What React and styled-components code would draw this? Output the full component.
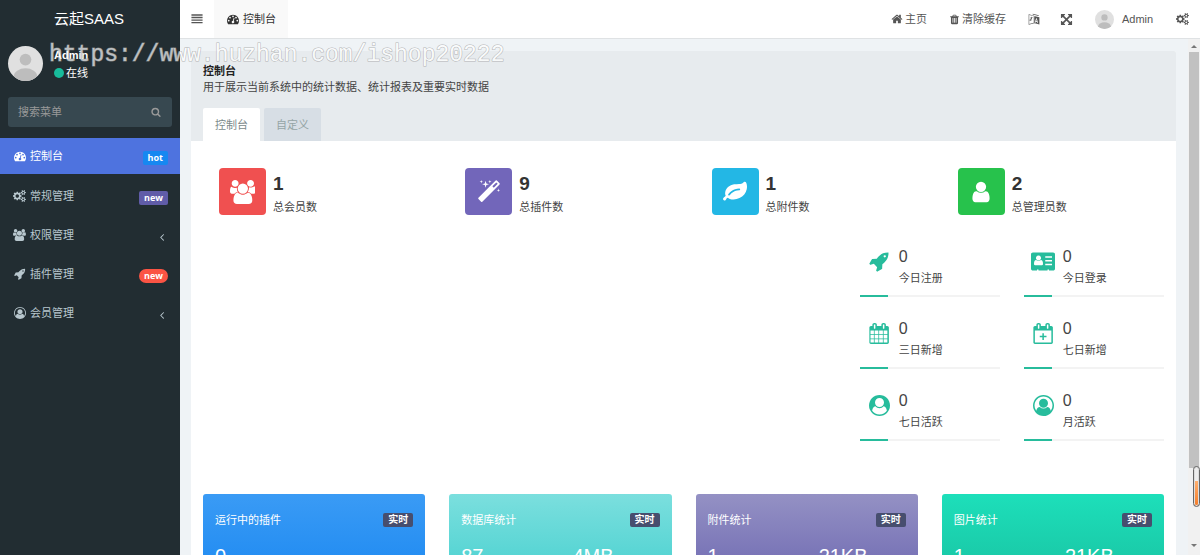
import React, { useState } from 'react';
import styled, { createGlobalStyle } from 'styled-components';

const GlobalStyle = createGlobalStyle`
	* {
		box-sizing: border-box;
	}

	body {
		margin: 0;
		overflow: hidden;
		font-family: "Liberation Sans", "Noto Sans CJK SC", sans-serif;
		font-size: 11px;
		line-height: 16px;
		color: #444;
		background: #eff3f6;
	}

	a {
		color: inherit;
		text-decoration: none;
	}

	button, input {
		font: inherit;
		color: inherit;
		border: 0;
		padding: 0;
		background: none;
	}

	button {
		cursor: pointer;
	}
`;

const CALENDAR_FRAME = 'M544 448v-288q0-13-9.5-22.5t-22.5-9.5h-64q-13 0-22.5 9.5t-9.5 22.5v288q0 13 9.5 22.5t22.5 9.5h64q13 0 22.5-9.5t9.5-22.5zm768 0v-288q0-13-9.5-22.5t-22.5-9.5h-64q-13 0-22.5 9.5t-9.5 22.5v288q0 13 9.5 22.5t22.5 9.5h64q13 0 22.5-9.5t9.5-22.5zm384-64v1280q0 52-38 90t-90 38h-1408q-52 0-90-38t-38-90v-1280q0-52 38-90t90-38h128v-96q0-66 47-113t113-47h64q66 0 113 47t47 113v96h384v-96q0-66 47-113t113-47h64q66 0 113 47t47 113v96h128q52 0 90 38t38 90z';

const COG_SMALL = 'q0 16-149 31-12 27-30 52 51 113 51 138 0 4-4 7-122 71-124 71-8 0-46-47t-52-68q-20 2-30 2t-30-2q-14 21-52 68t-46 47q-2 0-124-71-4-3-4-7 0-25 51-138-18-25-30-52-149-15-149-31v-140q0-16 149-31 13-29 30-52-51-113-51-138 0-4 4-7 4-2 35-20t59-34 30-16q8 0 46 46.5t52 67.5q20-2 30-2t30 2q51-71 92-112l6-2q4 0 124 70 4 3 4 7 0 25-51 138 17 23 30 52 149 15 149 31z';

// [viewBox width, path]
const icons = {
	dashboard: [1792, 'M384 1152q0-53-37.5-90.5t-90.5-37.5-90.5 37.5-37.5 90.5 37.5 90.5 90.5 37.5 90.5-37.5 37.5-90.5zm192-448q0-53-37.5-90.5t-90.5-37.5-90.5 37.5-37.5 90.5 37.5 90.5 90.5 37.5 90.5-37.5 37.5-90.5zm428 481l101-382q6-26-7.5-48.5t-38.5-29.5-48 6.5-30 39.5l-101 382q-60 5-107 43.5t-63 98.5q-20 77 20 146t117 89 146-20 89-117q16-60-6-117t-72-91zm660-33q0-53-37.5-90.5t-90.5-37.5-90.5 37.5-37.5 90.5 37.5 90.5 90.5 37.5 90.5-37.5 37.5-90.5zm-640-640q0-53-37.5-90.5t-90.5-37.5-90.5 37.5-37.5 90.5 37.5 90.5 90.5 37.5 90.5-37.5 37.5-90.5zm448 192q0-53-37.5-90.5t-90.5-37.5-90.5 37.5-37.5 90.5 37.5 90.5 90.5 37.5 90.5-37.5 37.5-90.5zm320 448q0 261-141 483-19 29-54 29h-1402q-35 0-54-29-141-221-141-483 0-182 71-348t191-286 286-191 348-71 348 71 286 191 191 286 71 348z'],
	cogs: [1920, 'M896 896q0-106-75-181t-181-75-181 75-75 181 75 181 181 75 181-75 75-181zm768 512q0-52-38-90t-90-38-90 38-38 90q0 53 37.5 90.5t90.5 37.5 90.5-37.5 37.5-90.5zm0-1024q0-52-38-90t-90-38-90 38-38 90q0 53 37.5 90.5t90.5 37.5 90.5-37.5 37.5-90.5zm-384 421v185q0 10-7 19.5t-16 10.5l-155 24q-11 35-32 76 34 48 90 115 7 10 7 20 0 12-7 19-23 30-82.5 89.5t-78.5 59.5q-11 0-21-7l-115-90q-37 19-77 31-11 108-23 155-7 24-30 24h-186q-11 0-20-7.5t-10-17.5l-23-153q-34-10-75-31l-118 89q-7 7-20 7-11 0-21-8-144-133-144-160 0-9 7-19 10-14 41-53t47-61q-23-44-35-82l-152-24q-10-1-17-9.5t-7-19.5v-185q0-10 7-19.5t16-10.5l155-24q11-35 32-76-34-48-90-115-7-11-7-20 0-12 7-20 22-30 82-89t79-59q11 0 21 7l115 90q34-18 77-32 11-108 23-154 7-24 30-24h186q11 0 20 7.5t10 17.5l23 153q34 10 75 31l118-89q8-7 20-7 11 0 21 8 144 133 144 160 0 9-7 19-12 16-42 54t-45 60q23 48 34 82l152 23q10 2 17 10.5t7 19.5zM1920 1338v140' + COG_SMALL + 'M1920 314v140' + COG_SMALL],
	users: [1920, 'M593 896q-162 5-265 128h-134q-82 0-138-40.5t-56-118.5q0-353 124-353 6 0 43.5 21t97.5 42.5 119 21.5q67 0 133-23-5 37-5 66 0 159 93 293zm1071 637q0 120-73 189.5t-194 69.5h-874q-121 0-194-69.5t-73-189.5q0-53 3.5-103.5t14-109 26.5-108.5 43-97.5 62-81 85.5-53.5 111.5-20q10 0 43 21.5t73 48 107 48 135 21.5 135-21.5 107-48 73-48 43-21.5q61 0 111.5 20t85.5 53.5 62 81 43 97.5 26.5 108.5 14 109 3.5 103.5zm-1024-1277q0 106-75 181t-181 75-181-75-75-181 75-181 181-75 181 75 75 181zm704 384q0 159-112.5 271.5t-271.5 112.5-271.5-112.5-112.5-271.5 112.5-271.5 271.5-112.5 271.5 112.5 112.5 271.5zm576 225q0 78-56 118.5t-138 40.5h-134q-103-123-265-128 93-134 93-293 0-29-5-66 66 23 133 23 59 0 119-21.5t97.5-42.5 43.5-21q124 0 124 353zm-128-609q0 106-75 181t-181 75-181-75-75-181 75-181 181-75 181 75 75 181z'],
	rocket: [1792, 'M1440 448q0-40-28-68t-68-28-68 28-28 68 28 68 68 28 68-28 28-68zm224-288q0 249-75.5 430.5t-253.5 360.5q-81 80-195 176l-20 379q-2 16-16 26l-384 224q-7 4-16 4-12 0-23-9l-64-64q-13-14-8-32l85-276-281-281-276 85q-3 1-9 1-14 0-23-9l-64-64q-17-19-5-39l224-384q10-14 26-16l379-20q96-114 176-195 188-187 358-258t431-71q14 0 24 9.5t10 22.5z'],
	userCircle: [1792, 'M1523 1339q-22-155-87.5-257.5t-184.5-118.5q-67 74-159.5 115.5t-195.5 41.5-195.5-41.5-159.5-115.5q-119 16-184.5 118.5t-87.5 257.5q106 150 271 237.5t356 87.5 356-87.5 271-237.5zm-243-699q0-159-112.5-271.5t-271.5-112.5-271.5 112.5-112.5 271.5 112.5 271.5 271.5 112.5 271.5-112.5 112.5-271.5zm512 256q0 182-71 347.5t-190.5 286-285.5 191.5-349 71q-182 0-348-71t-286-191-191-286-71-348 71-348 191-286 286-191 348-71 348 71 286 191 191 286 71 348z'],
	userCircleOutline: [1792, 'M896 0q182 0 348 71t286 191 191 286 71 348q0 181-70.5 347t-190.5 286-286 191.5-349 71.5-349-71-285.5-191.5-190.5-286-71-347.5 71-348 191-286 286-191 348-71zm619 1351q149-205 149-455 0-156-61-298t-164-245-245-164-298-61-298 61-245 164-164 245-61 298q0 250 149 455 66-327 306-327 131 128 313 128t313-128q240 0 306 327zm-235-647q0-159-112.5-271.5t-271.5-112.5-271.5 112.5-112.5 271.5 112.5 271.5 271.5 112.5 271.5-112.5 112.5-271.5z'],
	search: [1792, 'M1216 832q0-185-131.5-316.5t-316.5-131.5-316.5 131.5-131.5 316.5 131.5 316.5 316.5 131.5 316.5-131.5 131.5-316.5zm512 832q0 52-38 90t-90 38q-54 0-90-38l-343-342q-179 124-399 124-143 0-273.5-55.5t-225-150-150-225-55.5-273.5 55.5-273.5 150-225 225-150 273.5-55.5 273.5 55.5 225 150 150 225 55.5 273.5q0 220-124 399l343 343q37 37 37 90z'],
	angleLeft: [1792, 'M1203 544q0 13-10 23l-393 393 393 393q10 10 10 23t-10 23l-50 50q-10 10-23 10t-23-10l-466-466q-10-10-10-23t10-23l466-466q10-10 23-10t23 10l50 50q10 10 10 23z'],
	bars: [1792, 'M64 192h1664v200h-1664zM64 576h1664v200h-1664zM64 960h1664v200h-1664zM64 1344h1664v200h-1664z'],
	home: [1792, 'M1472 992v480q0 26-19 45t-45 19h-384v-384h-256v384h-384q-26 0-45-19t-19-45v-480q0-1 .5-3t.5-3l575-474 575 474q1 2 1 6zm223-69l-62 74q-8 9-21 11h-3q-13 0-21-7l-692-577-692 577q-12 8-24 7-13-2-21-11l-62-74q-8-10-7-23.5t11-21.5l719-599q32-26 76-26t76 26l244 204v-195q0-14 9-23t23-9h192q14 0 23 9t9 23v408l219 182q10 8 11 21.5t-7 23.5z'],
	trash: [1792, 'M704 1376v-704q0-14-9-23t-23-9h-64q-14 0-23 9t-9 23v704q0 14 9 23t23 9h64q14 0 23-9t9-23zm256 0v-704q0-14-9-23t-23-9h-64q-14 0-23 9t-9 23v704q0 14 9 23t23 9h64q14 0 23-9t9-23zm256 0v-704q0-14-9-23t-23-9h-64q-14 0-23 9t-9 23v704q0 14 9 23t23 9h64q14 0 23-9t9-23zm-544-992h448l-48-117q-7-9-17-11h-317q-10 2-17 11zm928 32v64q0 14-9 23t-23 9h-96v948q0 83-47 143.5t-113 60.5h-832q-66 0-113-58.5t-47-141.5v-952h-96q-14 0-23-9t-9-23v-64q0-14 9-23t23-9h309l70-167q15-37 54-63t79-26h320q40 0 79 26t54 63l70 167h309q14 0 23 9t9 23z'],
	language: [1792, 'M100 180l830 220v1140l-830 200zM180 280v1360l680-170v-1010zM700 120l900 210v130l-900-220zM900 440l800 200v1060l-800-200zM1230 760l-210 660 100 30 50-160 190 60 50 160 100 30-180-700zM1260 940l70 260-120-40zM330 700l130-40 40-110 70 30-30 80 160-20v80l-90 20q-30 190-180 340l110 60-40 60-130-70-110 80-50-60 110-90q-60-80-60-150l70-20q10 60 40 100 90-100 110-220l-140 40z'],
	expand: [1792, 'M1411 541l-355 355 355 355 144-144q29-31 70-14 39 17 39 59v448q0 26-19 45t-45 19h-448q-42 0-59-40-17-39 14-69l144-144-355-355-355 355 144 144q31 30 14 69-17 40-59 40h-448q-26 0-45-19t-19-45v-448q0-42 40-59 39-17 69 14l144 144 355-355-355-355-144 144q-19 19-45 19-12 0-24-5-40-17-40-59v-448q0-26 19-45t45-19h448q42 0 59 40 17 39-14 69l-144 144 355 355 355-355-144-144q-31-30-14-69 17-40 59-40h448q26 0 45 19t19 45v448q0 42-39 59-13 5-25 5-26 0-45-19z'],
	magic: [1792, 'M1254 581l293-293-107-107-293 293zm447-293q0 27-18 45l-1286 1286q-18 18-45 18t-45-18l-198-198q-18-18-18-45t18-45l1286-1286q18-18 45-18t45 18l198 198q18 18 18 45zm-1351-190l98 30-98 30-30 98-30-98-98-30 98-30 30-98zm350 162l196 60-196 60-60 196-60-196-196-60 196-60 60-196zm930 478l98 30-98 30-30 98-30-98-98-30 98-30 30-98zm-640-640l98 30-98 30-30 98-30-98-98-30 98-30 30-98z'],
	leaf: [1792, 'M1280 704q0-26-19-45t-45-19q-172 0-318 49.5t-259.5 134-235.5 219.5q-19 21-19 45 0 26 19 45t45 19q24 0 45-19 27-24 74-71t67-66q137-124 268.5-176t313.5-52q26 0 45-19t19-45zm512-198q0 95-20 193-46 224-184.5 383t-357.5 268q-214 108-438 108-148 0-286-47-15-5-88-42t-96-37q-16 0-39.5 32t-45 70-52.5 70-60 32q-43 0-63.5-17.5t-45.5-59.5q-2-4-6-11t-5.5-10-3-9.5-1.5-13.5q0-35 31-73.5t68-65.5 68-56 31-48q0-4-14-38t-16-44q-9-51-9-104 0-115 43.5-220t119-184.5 170.5-139 204-95.5q55-18 145-25.5t179.5-9 178.5-6 163.5-24 113.5-56.5l29.5-29.5 29.5-28 27-20 36.5-16 43.5-4.5q39 0 70.5 46t47.5 112 24 124 8 96z'],
	user: [1792, 'M1536 1399q0 109-62.5 187t-150.5 78h-854q-88 0-150.5-78t-62.5-187q0-85 8.5-160.5t31.5-152 58.5-131 94-89 134.5-34.5q131 128 313 128t313-128q76 0 134.5 34.5t94 89 58.5 131 31.5 152 8.5 160.5zm-256-887q0 159-112.5 271.5t-271.5 112.5-271.5-112.5-112.5-271.5 112.5-271.5 271.5-112.5 271.5 112.5 112.5 271.5z'],
	idCard: [2048, 'M160 128h1728q66 0 113 47t47 113v1216q0 66-47 113t-113 47h-352v-96h-128v96h-768v-96h-128v96h-352q-66 0-113-47t-47-113v-1216q0-66 47-113t113-47zM1216 448v128h576v-128zM1216 768v128h576v-128zM1216 1088v128h576v-128zM640 384a215 215 0 1 0 1 0zM440 760q-184 20-184 340 0 116 100 116h568q100 0 100-116 0-320-184-340-90 90-200 90t-200-90z'],
	calendar: [1792, CALENDAR_FRAME + 'M128 640h288v288h-288zM480 640h320v288h-320zM864 640h320v288h-320zM1248 640h320v288h-320zM128 992h288v320h-288zM480 992h320v320h-320zM864 992h320v320h-320zM1248 992h320v320h-320zM128 1376h288v288h-288zM480 1376h320v288h-320zM864 1376h320v288h-320zM1248 1376h320v288h-320z'],
	calendarPlus: [1792, CALENDAR_FRAME + 'M160 640h1408v1024h-1408zM800 864h128v224h224v128h-224v224h-128v-224h-224v-128h224z'],
};

const Svg = styled.svg`
	flex: none;
	display: block;
	height: ${(props) => props.$size}px;
	fill: currentColor;
	fill-rule: evenodd;
`;

function Icon({ name, size = 12 }) {
	const [ width, d ] = icons[name];

	return (
		<Svg viewBox={`0 0 ${width} 1792`} $size={size} aria-hidden="true"><path d={d} /></Svg>
	)
}

const StyledAvatar = styled.svg`
	flex: none;
	width: ${(props) => props.$size}px;
	height: ${(props) => props.$size}px;
	border-radius: 50%;
	background: #e0e0e0;
	fill: #bdbdbd;
`;

function Avatar({ size }) {
	return (
		<StyledAvatar viewBox="0 0 36 36" $size={size} aria-hidden="true">
			<circle cx="18" cy="14" r="6" />
			<ellipse cx="18" cy="31" rx="12" ry="8" />
		</StyledAvatar>
	)
}

const Layout = styled.div`
	display: flex;
	height: 100vh;
	overflow: hidden;
`;

const StyledSidebar = styled.aside`
	flex: none;
	width: 180px;
	background: #222d32;
	color: #b8c7ce;
`;

const Logo = styled.a`
	display: block;
	height: 38px;
	padding-right: 2px;
	line-height: 38px;
	font-size: 15px;
	text-align: center;
	color: #fff;
`;

const UserPanel = styled.div`
	display: flex;
	gap: 11px;
	padding: 8px;
	color: #fff;

	strong, span {
		display: flex;
		align-items: center;
		gap: 2px;
		height: 18px;
	}
`;

const Dot = styled.i`
	width: 10px;
	height: 10px;
	border-radius: 50%;
	background: #18bc9c;
`;

const SearchForm = styled.form`
	display: flex;
	align-items: center;
	height: 30px;
	margin: 7px 8px 11px;
	padding: 0 11px 0 10px;
	border-radius: 3px;
	background: #374850;
	color: #999;

	input {
		flex: 1;
		min-width: 0;
		outline: none;
	}

	input::placeholder {
		color: #999;
	}
`;

const Menu = styled.nav`
	display: flex;
	flex-direction: column;
`;

const MenuItem = styled.a`
	display: flex;
	align-items: center;
	gap: 4px;
	height: ${(props) => props.$active ? 36 : 39}px;
	margin-bottom: ${(props) => props.$active ? 2 : 0}px;
	padding: 0 12px 0 13px;
	background: ${(props) => props.$active ? '#4e73df' : 'none'};
	color: ${(props) => props.$active ? '#fff' : 'inherit'};
`;

const MenuIcon = styled.span`
	display: flex;
	justify-content: center;
	width: 13px;
`;

const MenuEnd = styled.span`
	margin-left: auto;
	padding-top: 4px;
`;

const MenuBadge = styled.b`
	display: block;
	padding: 0 5px;
	border-radius: ${(props) => props.$round ? 7 : 2}px;
	background: ${(props) => props.$color};
	color: #fff;
	font-family: "Open Sans", sans-serif;
	font-size: 9px;
	line-height: 14px;
`;

const Main = styled.div`
	flex: 1;
	min-width: 0;
	display: flex;
	flex-direction: column;
`;

const Header = styled.header`
	flex: none;
	display: flex;
	align-items: stretch;
	height: 39px;
	padding-right: 11px;
	background: #fff;
	border-bottom: 1px solid #dfe2e4;
	color: #555;
`;

const HeaderLink = styled.a`
	display: flex;
	align-items: center;
	gap: 2px;
	margin-right: ${(props) => props.$gap}px;
`;

const HeaderName = styled.span`
	padding-left: 6px;
`;

const MenuToggle = styled.button`
	width: 34px;
	display: flex;
	align-items: center;
	justify-content: center;
`;

const PageTab = styled.a`
	display: flex;
	align-items: center;
	gap: 4px;
	padding: 0 12px 0 13px;
	margin-right: auto;
	background: #f9f9f9;
	color: #333;
`;

const Viewport = styled.div`
	flex: 1;
	min-height: 0;
	display: flex;
`;

const Content = styled.main`
	flex: 1;
	min-width: 0;
	padding: 12px 12px 0 11px;
	overflow: hidden;
`;

const Panel = styled.section`
	background: #fff;
	border-radius: 2px;
`;

const PanelHeading = styled.div`
	padding: 12px 12px 0;
	background: #e7ebee;
	border-radius: 2px 2px 0 0;

	h1, p {
		margin: 0;
		font-size: 11px;
		line-height: 16px;
	}

	h1 {
		color: #222;
	}
`;

const Tabs = styled.div`
	display: flex;
	gap: 4px;
	padding-top: 13px;
`;

const Tab = styled.button`
	height: 33px;
	padding: 0 12px;
	border-radius: 2px 2px 0 0;
	background: ${(props) => props.$active ? '#fff' : '#d7dee5'};
	color: ${(props) => props.$active ? '#7b8a8b' : '#95a5a6'};
`;

const Row = styled.div`
	display: grid;
	grid-template-columns: repeat(${(props) => props.$columns}, 1fr);
	gap: 24px;
	padding: 0 12px;
`;

const Stat = styled.div`
	display: flex;
	gap: 7px;
	padding: 27px 16px 25px;

	strong {
		display: block;
		padding-top: 4px;
		font-size: 19px;
		line-height: 24px;
		color: #333;
	}

	span {
		display: block;
		line-height: 22px;
	}
`;

const StatIcon = styled.div`
	display: flex;
	align-items: center;
	justify-content: center;
	width: 47px;
	height: 47px;
	border-radius: 4px;
	background: ${(props) => props.$color};
	color: #fff;
`;

const ChartArea = styled.div`
	grid-column: span 4;
`;

const MiniStats = styled.div`
	grid-column: span 2;
	display: grid;
	grid-template-columns: 1fr 1fr;
	column-gap: 24px;
	padding-bottom: 35px;
`;

const MiniStat = styled.div`
	height: 72px;
	padding-top: 2px;
`;

const MiniBody = styled.div`
	display: grid;
	grid-template-columns: 39px 1fr;
	height: 50px;

	strong {
		display: block;
		font-size: 16px;
		font-weight: normal;
		line-height: 24px;
	}

	span {
		display: block;
		line-height: 18px;
	}
`;

const MiniIcon = styled.div`
	display: flex;
	justify-content: center;
	padding-top: 6px;
	color: #27bc9c;
`;

const Bar = styled.div`
	height: 2px;
	background: #f3f3f3;

	div {
		height: 2px;
		background: #27bc9c;
	}
`;

const Card = styled.div`
	min-height: 110px;
	padding: 16px 12px;
	border-radius: 3px;
	background: linear-gradient(${(props) => props.$from}, ${(props) => props.$to});
	color: #fff;
`;

const CardHead = styled.div`
	display: flex;
	align-items: center;
	justify-content: space-between;
	height: 20px;
`;

const CardBadge = styled.b`
	padding: 0 5px;
	border-radius: 2px;
	background: #474e6e;
	font-size: 10px;
	line-height: 14px;
`;

const CardNumbers = styled.div`
	display: grid;
	grid-template-columns: 1fr 1fr;
	gap: 24px;
	padding-top: 14px;
	font-size: 20px;
	line-height: 24px;
`;

const Scrollbar = styled.div`
	flex: none;
	display: flex;
	flex-direction: column;
	align-items: center;
	width: 12px;
	padding: 3px 1px 5px;
	background: #f1f1f1;
`;

const ScrollArrow = styled.i`
	border: 3px solid transparent;
	border-${(props) => props.$down ? 'top' : 'bottom'}-color: #777;
`;

const ScrollThumb = styled.div`
	flex: 11;
	width: 100%;
	margin-top: 4px;
	background: #c1c1c1;
`;

const ScrollRest = styled.div`
	flex: 2;
`;

const Gauge = styled.div`
	position: absolute;
	right: 0;
	bottom: 48px;
	width: 7px;
	height: 41px;
	border: 1px solid #666;
	border-radius: 4px;
	background: linear-gradient(#eee 35%, #ffb070 35%, #f57c28);
	box-shadow: inset 0 0 0 1px #ddd;
`;

const Watermark = styled.div`
	position: absolute;
	top: 39px;
	left: 49px;
	font-family: "Liberation Mono", monospace;
	font-size: 23px;
	line-height: 32px;
	color: #fff;
	-webkit-text-stroke: 1px #999;
	paint-order: stroke fill;
	opacity: .7;
	pointer-events: none;
`;

const menu = [
	{ icon: 'dashboard', label: '控制台', badge: 'hot', color: '#1688f1', active: true },
	{ icon: 'cogs', label: '常规管理', badge: 'new', color: '#605ca8' },
	{ icon: 'users', label: '权限管理' },
	{ icon: 'rocket', label: '插件管理', badge: 'new', color: '#fb5444', round: true },
	{ icon: 'userCircleOutline', label: '会员管理' },
];

const stats = [
	{ icon: 'users', value: 1, label: '总会员数', color: '#f05050' },
	{ icon: 'magic', value: 9, label: '总插件数', color: '#7266ba' },
	{ icon: 'leaf', value: 1, label: '总附件数', color: '#23b7e5' },
	{ icon: 'user', value: 2, label: '总管理员数', color: '#27c24c' },
];

const miniStats = [
	{ icon: 'rocket', value: 0, label: '今日注册', percent: 20 },
	{ icon: 'idCard', value: 0, label: '今日登录', percent: 20 },
	{ icon: 'calendar', value: 0, label: '三日新增', percent: 20 },
	{ icon: 'calendarPlus', value: 0, label: '七日新增', percent: 20 },
	{ icon: 'userCircle', value: 0, label: '七日活跃', percent: 20 },
	{ icon: 'userCircleOutline', value: 0, label: '月活跃', percent: 20 },
];

const cards = [
	{ title: '运行中的插件', numbers: ['0'], from: '#3a9bf5', to: '#1584f0' },
	{ title: '数据库统计', numbers: ['87', '4MB'], from: '#7bdfde', to: '#3ccdcc' },
	{ title: '附件统计', numbers: ['1', '21KB'], from: '#9491c4', to: '#655fad' },
	{ title: '图片统计', numbers: ['1', '21KB'], from: '#1ddfba', to: '#18bc9c' },
];

function Sidebar() {
	return (
		<StyledSidebar>
			<Logo href="#">云起SAAS</Logo>
			<UserPanel>
				<Avatar size={35} />
				<div>
					<strong>Admin</strong>
					<span><Dot />在线</span>
				</div>
			</UserPanel>
			<SearchForm>
				<input type="text" placeholder="搜索菜单" aria-label="搜索菜单" />
				<button type="button" aria-label="搜索"><Icon name="search" size={10} /></button>
			</SearchForm>
			<Menu>
				{menu.map((item) => (
					<MenuItem key={item.label} href="#" $active={item.active}>
						<MenuIcon><Icon name={item.icon} /></MenuIcon>
						{item.label}
						<MenuEnd>
							{item.badge
								? <MenuBadge $color={item.color} $round={item.round}>{item.badge}</MenuBadge>
								: <Icon name="angleLeft" />}
						</MenuEnd>
					</MenuItem>
				))}
			</Menu>
		</StyledSidebar>
	)
}

function TopBar() {
	return (
		<Header>
			<MenuToggle aria-label="菜单"><Icon name="bars" /></MenuToggle>
			<PageTab href="#"><Icon name="dashboard" />控制台</PageTab>
			<HeaderLink href="#" $gap={22}><Icon name="home" />主页</HeaderLink>
			<HeaderLink href="#" $gap={22}><Icon name="trash" size={11} />清除缓存</HeaderLink>
			<HeaderLink href="#" $gap={20} aria-label="语言"><Icon name="language" /></HeaderLink>
			<HeaderLink href="#" $gap={22} aria-label="全屏"><Icon name="expand" size={13} /></HeaderLink>
			<HeaderLink href="#" $gap={23}><Avatar size={19} /><HeaderName>Admin</HeaderName></HeaderLink>
			<HeaderLink href="#" $gap={0} aria-label="设置"><Icon name="cogs" /></HeaderLink>
		</Header>
	)
}

function Dashboard() {
	const [ tab, setTab ] = useState('控制台');

	return (
		<Panel>
			<PanelHeading>
				<h1>控制台</h1>
				<p>用于展示当前系统中的统计数据、统计报表及重要实时数据</p>
				<Tabs role="tablist">
					{['控制台', '自定义'].map((name) => (
						<Tab key={name} role="tab" aria-selected={tab === name} $active={tab === name} onClick={() => setTab(name)}>{name}</Tab>
					))}
				</Tabs>
			</PanelHeading>
			<Row $columns={4}>
				{stats.map((item) => (
					<Stat key={item.label}>
						<StatIcon $color={item.color}><Icon name={item.icon} size={24} /></StatIcon>
						<div>
							<strong>{item.value}</strong>
							<span>{item.label}</span>
						</div>
					</Stat>
				))}
			</Row>
			<Row $columns={6}>
				<ChartArea />
				<MiniStats>
					{miniStats.map((item) => (
						<MiniStat key={item.label}>
							<MiniBody>
								<MiniIcon><Icon name={item.icon} size={21} /></MiniIcon>
								<div>
									<strong>{item.value}</strong>
									<span>{item.label}</span>
								</div>
							</MiniBody>
							<Bar><div style={{ width: `${item.percent}%` }} /></Bar>
						</MiniStat>
					))}
				</MiniStats>
			</Row>
			<Row $columns={4}>
				{cards.map((card) => (
					<Card key={card.title} $from={card.from} $to={card.to}>
						<CardHead>{card.title}<CardBadge>实时</CardBadge></CardHead>
						<CardNumbers>{card.numbers.map((n) => <span key={n}>{n}</span>)}</CardNumbers>
					</Card>
				))}
			</Row>
		</Panel>
	)
}

export default function App() {
	return (
		<>
			<GlobalStyle />
			<Layout>
				<Sidebar />
				<Main>
					<TopBar />
					<Viewport>
						<Content><Dashboard /></Content>
						<Scrollbar aria-hidden="true">
							<ScrollArrow />
							<ScrollThumb />
							<ScrollRest />
							<ScrollArrow $down />
						</Scrollbar>
					</Viewport>
				</Main>
			</Layout>
			<Gauge />
			<Watermark>https://www.huzhan.com/ishop20222</Watermark>
		</>
	)
}
